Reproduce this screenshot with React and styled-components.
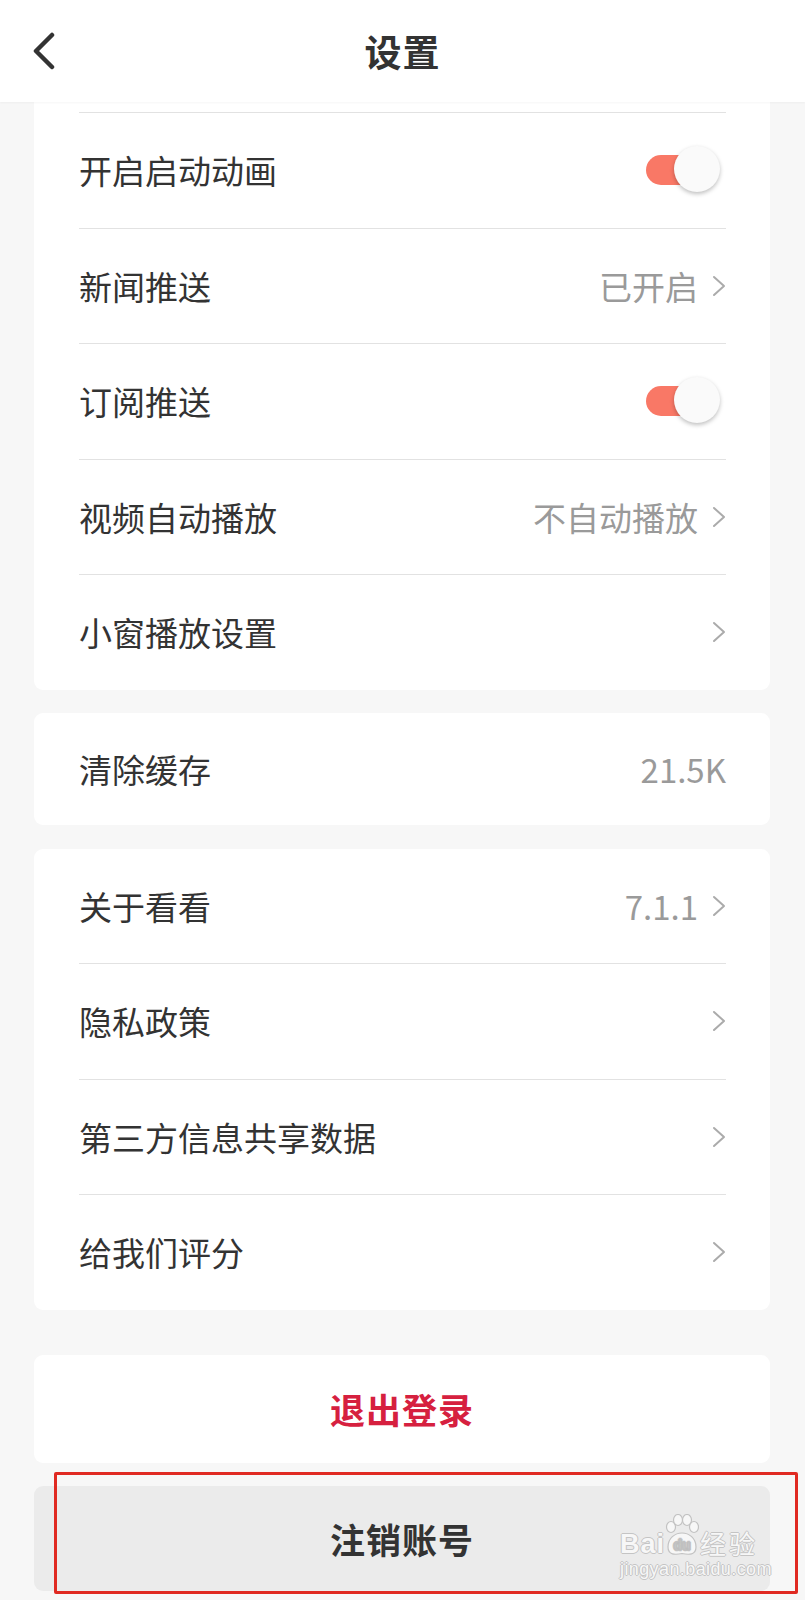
import React from "react";
import styled, { createGlobalStyle } from "styled-components";

const Global = createGlobalStyle`
  html, body { margin: 0; padding: 0; }
  body {
    background: #f7f7f7;
    font-family: "Noto Sans CJK SC", "Noto Sans", "Liberation Sans", sans-serif;
    color: #333;
  }
`;

const Page = styled.div`
  width: 805px;
  min-height: 1600px;
  background: #f7f7f7;
`;

const Header = styled.header`
  height: 102px;
  background: #fff;
  display: grid;
  grid-template-columns: 120px 1fr 120px;
  align-items: center;
  box-shadow: 0 1px 2px rgba(0, 0, 0, 0.04);
  position: relative;
  z-index: 1;
`;

const BackBtn = styled.div`
  padding-left: 32px;
  display: flex;
  align-items: center;
  height: 100%;
`;

const Title = styled.h1`
  margin: 0;
  text-align: center;
  font-size: 37px;
  font-weight: 700;
  color: #333;
  letter-spacing: 1px;
`;

const Content = styled.main`
  padding: 0 35px 10px 34px;
  display: flex;
  flex-direction: column;
`;

const Card = styled.section`
  background: ${(p) => p.$bg || "#fff"};
  border-radius: ${(p) => (p.$flatTop ? "0 0 9px 9px" : "9px")};
  padding-top: ${(p) => p.$padTop || 0}px;
  margin-top: ${(p) => p.$gap || 0}px;
`;

const Row = styled.div`
  padding: 0 44px 0 45px;
`;

const RowInner = styled.div`
  height: ${(p) => p.$h || 114.5}px;
  display: flex;
  align-items: center;
  justify-content: space-between;
  border-top: ${(p) => (p.$divider ? "1px solid #e2e2e2" : "none")};
`;

const Label = styled.span`
  font-size: 33px;
  color: #333;
  font-weight: 400;
`;

const Right = styled.div`
  display: flex;
  align-items: center;
  gap: 14px;
`;

const Value = styled.span`
  font-size: 33px;
  color: #9a9a9a;
`;

const Switch = styled.div`
  position: relative;
  width: 74px;
  height: 48px;
  margin-right: 6px;
`;

const Track = styled.div`
  position: absolute;
  left: 0;
  top: 9px;
  width: 56px;
  height: 30px;
  border-radius: 15px;
  background: #f97866;
`;

const Knob = styled.div`
  position: absolute;
  right: 0;
  top: 0;
  width: 46px;
  height: 46px;
  border-radius: 50%;
  background: #fafafa;
  box-shadow: 0 2px 4px rgba(0, 0, 0, 0.25);
`;

const ActionCard = styled(Card)`
  height: ${(p) => p.$h}px;
  display: flex;
  align-items: center;
  justify-content: center;
`;

const ActionText = styled.span`
  font-size: 35px;
  font-weight: 700;
  color: ${(p) => p.$color};
  letter-spacing: 1px;
`;

const Wrap = styled.div`
  position: relative;
  margin-top: ${(p) => p.$gap}px;
`;

const Highlight = styled.div`
  position: absolute;
  top: -14px;
  left: 20px;
  right: -28px;
  bottom: -3px;
  border: 3px solid #e02a22;
  border-radius: 2px;
  pointer-events: none;
`;

const Watermark = styled.div`
  position: absolute;
  left: 586px;
  top: 26px;
  display: flex;
  flex-direction: column;
  align-items: flex-start;
  pointer-events: none;
  color: #f7f7f7;
  font-family: "Liberation Sans", "Noto Sans CJK SC", sans-serif;
  text-shadow: 1px 0 0 #c4c4c4, -1px 0 0 #c4c4c4, 0 1px 0 #c4c4c4, 0 -1px 0 #c4c4c4;
`;

const WmTop = styled.div`
  display: flex;
  align-items: flex-end;
  height: 44px;
`;

const WmBai = styled.span`
  font-size: 27px;
  font-weight: 700;
  line-height: 24px;
  letter-spacing: 1px;
`;

const WmJing = styled.span`
  font-size: 26px;
  line-height: 26px;
  font-family: "Noto Sans CJK SC", sans-serif;
  letter-spacing: 3px;
  margin-left: 1px;
`;

const WmUrl = styled.span`
  font-size: 18px;
  line-height: 20px;
  margin-top: 3px;
  letter-spacing: 0.4px;
`;

const Chevron = () => (
  <svg width="14" height="22" viewBox="0 0 14 22">
    <polyline
      points="2,2 12,11 2,20"
      fill="none"
      stroke="#ababab"
      strokeWidth="2"
      strokeLinecap="round"
      strokeLinejoin="round"
    />
  </svg>
);

const BackIcon = () => (
  <svg width="24" height="38" viewBox="0 0 24 38">
    <polyline
      points="20,3 4,19 20,35"
      fill="none"
      stroke="#333"
      strokeWidth="4.5"
      strokeLinecap="round"
      strokeLinejoin="round"
    />
  </svg>
);

const Paw = () => (
  <svg width="34" height="42" viewBox="0 0 34 42">
    <g fill="#f7f7f7" stroke="#c2c2c2" strokeWidth="1.2">
      <ellipse cx="6" cy="13" rx="4.5" ry="5.5" />
      <ellipse cx="13" cy="6" rx="4.5" ry="5.5" />
      <ellipse cx="22" cy="6" rx="4.5" ry="5.5" />
      <ellipse cx="29" cy="13" rx="4.5" ry="5.5" />
      <path d="M3 33 C3 24 10 19 17 19 C24 19 31 24 31 33 C31 41 24 41 17 39.5 C10 41 3 41 3 33 Z" />
    </g>
    <text
      x="17"
      y="36"
      textAnchor="middle"
      fontSize="14"
      fontWeight="700"
      fontFamily="Liberation Sans, sans-serif"
      fill="#f7f7f7"
      stroke="#bdbdbd"
      strokeWidth="0.7"
    >
      du
    </text>
  </svg>
);

const Toggle = () => (
  <Switch>
    <Track />
    <Knob />
  </Switch>
);

const SettingRow = ({ label, value, chevron, toggle, divider }) => (
  <Row>
    <RowInner $divider={divider}>
      <Label>{label}</Label>
      <Right>
        {value && <Value>{value}</Value>}
        {chevron && <Chevron />}
        {toggle && <Toggle />}
      </Right>
    </RowInner>
  </Row>
);

export default function App() {
  return (
    <Page>
      <Global />
      <Header>
        <BackBtn>
          <BackIcon />
        </BackBtn>
        <Title>设置</Title>
        <div />
      </Header>
      <Content>
        <Card $flatTop $padTop={10}>
          <SettingRow divider label="开启启动动画" toggle />
          <SettingRow divider label="新闻推送" value="已开启" chevron />
          <SettingRow divider label="订阅推送" toggle />
          <SettingRow divider label="视频自动播放" value="不自动播放" chevron />
          <SettingRow divider label="小窗播放设置" chevron />
        </Card>
        <Card $gap={23}>
          <Row>
            <RowInner $h={112}>
              <Label>清除缓存</Label>
              <Value>21.5K</Value>
            </RowInner>
          </Row>
        </Card>
        <Card $gap={24}>
          <SettingRow label="关于看看" value="7.1.1" chevron />
          <SettingRow divider label="隐私政策" chevron />
          <SettingRow divider label="第三方信息共享数据" chevron />
          <SettingRow divider label="给我们评分" chevron />
        </Card>
        <ActionCard $gap={45} $h={108}>
          <ActionText $color="#d6203f">退出登录</ActionText>
        </ActionCard>
        <Wrap $gap={23}>
          <ActionCard $bg="#ebebeb" $h={105}>
            <ActionText $color="#333">注销账号</ActionText>
          </ActionCard>
          <Watermark>
            <WmTop>
              <WmBai>Bai</WmBai>
              <Paw />
              <WmJing>经验</WmJing>
            </WmTop>
            <WmUrl>jingyan.baidu.com</WmUrl>
          </Watermark>
          <Highlight />
        </Wrap>
      </Content>
    </Page>
  );
}
